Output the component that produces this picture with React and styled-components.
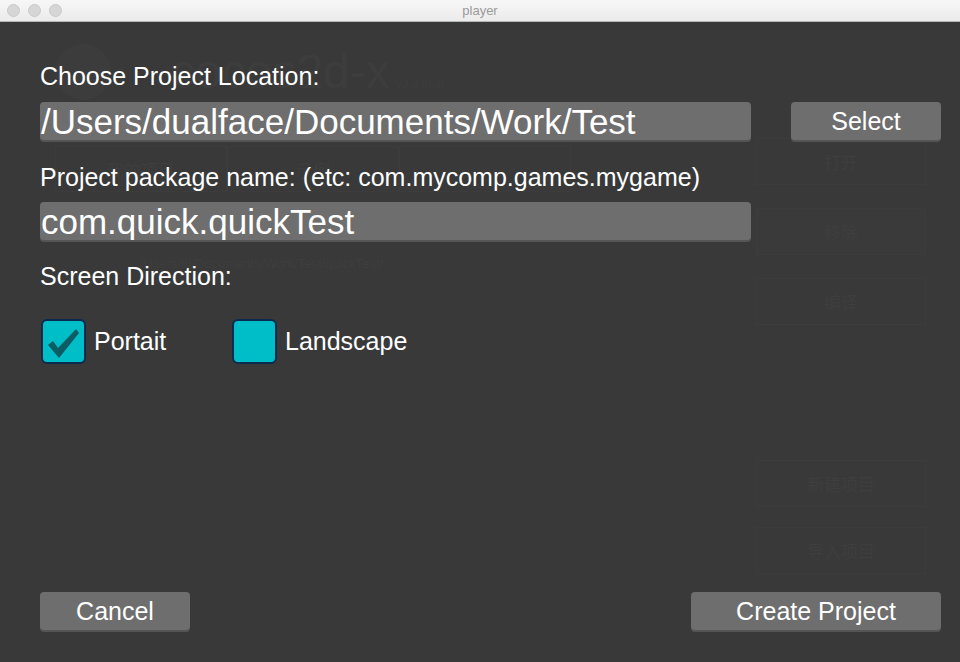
import React from 'react';
import styled, { createGlobalStyle } from 'styled-components';

const GlobalStyle = createGlobalStyle`
  html, body {
    margin: 0;
    padding: 0;
    background: #393939;
  }
  body {
    font-family: "Liberation Sans", Arial, sans-serif;
  }
`;

const Window = styled.div`
  width: 960px;
  height: 662px;
  display: flex;
  flex-direction: column;
  overflow: hidden;
`;

const TitleBar = styled.div`
  height: 21px;
  flex: none;
  display: grid;
  grid-template-columns: 1fr auto 1fr;
  align-items: center;
  background: linear-gradient(#f7f7f7, #ebebeb);
  border-bottom: 1px solid #b8b8b8;
`;

const Lights = styled.div`
  display: flex;
  gap: 8px;
  padding-left: 7px;
`;

const Light = styled.span`
  width: 11px;
  height: 11px;
  border-radius: 50%;
  background: #d6d6d6;
  border: 0.5px solid #c9c9c9;
`;

const WindowTitle = styled.div`
  font-family: "Liberation Sans", Arial, sans-serif;
  font-size: 13px;
  color: #9a9a9a;
`;

const Stage = styled.div`
  flex: 1;
  display: grid;
  background: #393939;
  & > * {
    grid-area: 1 / 1;
  }
`;

/* faint launcher screen behind the dialog */
const Ghost = styled.div`
  display: flex;
  justify-content: space-between;
  padding: 22px 35px 0 55px;
  color: #3e3e3e;
`;

const GhostLeft = styled.div`
  display: flex;
  flex-direction: column;
`;

const GhostLogo = styled.div`
  display: flex;
  align-items: flex-start;
  gap: 60px;
  font-size: 48px;
  line-height: 56px;
  color: #3d3d3d;
`;

const GhostCircle = styled.div`
  width: 56px;
  height: 56px;
  border-radius: 50%;
  background: #3c3c3c;
`;

const GhostVersion = styled.span`
  font-size: 12px;
  line-height: 20px;
  margin-left: 6px;
`;

const GhostTabs = styled.div`
  display: flex;
  margin-top: 46px;
`;

const GhostTab = styled.div`
  width: 170px;
  height: 44px;
  border: 1px solid #3c3c3c;
  display: flex;
  align-items: center;
  justify-content: center;
  font-size: 17px;
  font-family: "Liberation Sans", "Noto Sans CJK SC", sans-serif;
`;

const GhostPath = styled.div`
  margin: 64px 0 0 85px;
  font-size: 13px;
`;

const GhostRight = styled.div`
  width: 170px;
  display: flex;
  flex-direction: column;
  padding-top: 94px;
`;

const GhostButton = styled.div`
  height: 45px;
  margin-top: ${p => p.$gap}px;
  border: 1px solid #3c3c3c;
  background: ${p => (p.$filled ? '#3b3a3a' : 'transparent')};
  display: flex;
  align-items: center;
  justify-content: center;
  font-size: 17px;
  font-family: "Liberation Sans", "Noto Sans CJK SC", sans-serif;
`;

const Dialog = styled.div`
  display: flex;
  flex-direction: column;
  padding: 0 20px 32px 40px;
  color: #ffffff;
`;

const Label = styled.div`
  font-size: 25px;
  line-height: 28px;
  margin-top: ${p => p.$top}px;
`;

const Row = styled.div`
  display: flex;
  align-items: center;
  gap: 40px;
  margin-top: ${p => p.$top}px;
`;

const Field = styled.div`
  width: 710px;
  height: 38px;
  background: #6e6e6e;
  border-radius: 4px;
  box-shadow: 0 2px 0 #555555;
  font-size: 35px;
  line-height: 39px;
  padding-left: 1px;
  white-space: nowrap;
  overflow: hidden;
`;

const Button = styled.button`
  width: ${p => p.$w}px;
  height: 38px;
  border: none;
  border-radius: 4px;
  background: #6e6e6e;
  box-shadow: 0 2px 0 #555555;
  color: #ffffff;
  font-family: "Liberation Sans", Arial, sans-serif;
  font-size: 25px;
  padding: 0;
`;

const Options = styled.div`
  display: flex;
  align-items: center;
  margin-top: ${p => p.$top}px;
`;

const Option = styled.label`
  display: flex;
  align-items: center;
  gap: 8px;
  width: 191px;
  font-size: 25px;
`;

const Box = styled.span`
  width: 41px;
  height: 41px;
  margin-left: 1px;
  border: 2px solid #0b2a50;
  border-radius: 6px;
  background: #00bec8;
  display: flex;
  align-items: center;
  justify-content: center;
`;

const Footer = styled.div`
  margin-top: auto;
  display: flex;
  justify-content: space-between;
`;

const Check = () => (
  <svg width="41" height="41" viewBox="0 0 41 41">
    <path d="M5 24 L10 20 L15 27 L33 8 L36 12 L16 37 Z" fill="#0b5c64" />
  </svg>
);

const CheckOption = ({ checked, children }) => (
  <Option>
    <Box>{checked && <Check />}</Box>
    {children}
  </Option>
);

export default function App() {
  return (
    <>
      <GlobalStyle />
      <Window>
        <TitleBar>
          <Lights>
            <Light />
            <Light />
            <Light />
          </Lights>
          <WindowTitle>player</WindowTitle>
          <div />
        </TitleBar>
        <Stage>
          <Ghost>
            <GhostLeft>
              <GhostLogo>
                <GhostCircle />
                <span>
                  cocos2d-x<GhostVersion>v3.3 final</GhostVersion>
                </span>
              </GhostLogo>
              <GhostTabs>
                <GhostTab>我的项目</GhostTab>
                <GhostTab>示例</GhostTab>
                <GhostTab />
              </GhostTabs>
              <GhostPath>/Users/hl/Documents/Work/Test/quickTest/</GhostPath>
            </GhostLeft>
            <GhostRight>
              <GhostButton $gap={0}>打开</GhostButton>
              <GhostButton $gap={23} $filled>移除</GhostButton>
              <GhostButton $gap={23}>编译</GhostButton>
              <GhostButton $gap={135}>新建项目</GhostButton>
              <GhostButton $gap={20}>导入项目</GhostButton>
            </GhostRight>
          </Ghost>
          <Dialog>
            <Label $top={40}>Choose Project Location:</Label>
            <Row $top={12}>
              <Field>/Users/dualface/Documents/Work/Test</Field>
              <Button $w={150}>Select</Button>
            </Row>
            <Label $top={23}>Project package name: (etc: com.mycomp.games.mygame)</Label>
            <Row $top={11}>
              <Field>com.quick.quickTest</Field>
            </Row>
            <Label $top={22}>Screen Direction:</Label>
            <Options $top={29}>
              <CheckOption checked>Portait</CheckOption>
              <CheckOption>Landscape</CheckOption>
            </Options>
            <Footer>
              <Button $w={150}>Cancel</Button>
              <Button $w={250}>Create Project</Button>
            </Footer>
          </Dialog>
        </Stage>
      </Window>
    </>
  );
}
